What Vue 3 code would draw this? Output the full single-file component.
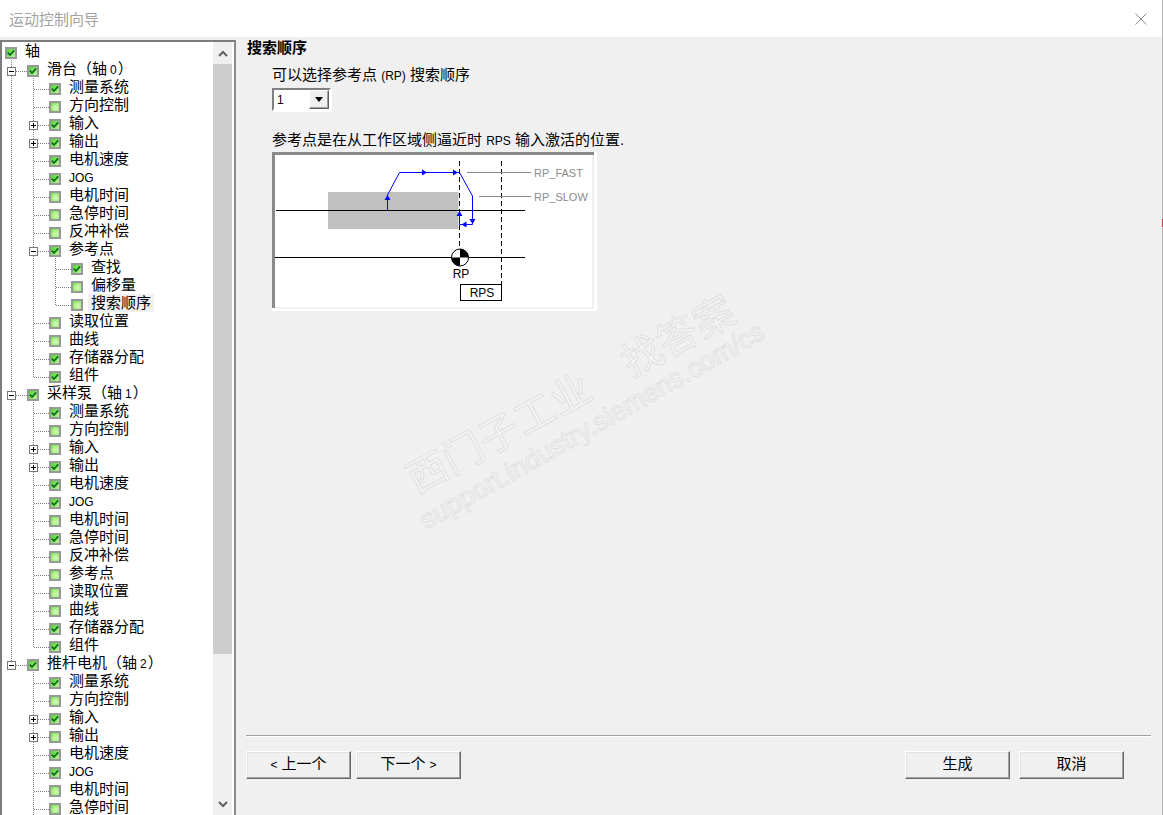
<script setup>
const r = (level, label, checked = false, exp = '', extra = '') => ({ level, label, checked, exp, extra })

const raw = [
  r(0, '轴', true),
  r(1, '滑台（轴', true, 'minus', '0'),
  r(2, '测量系统', true),
  r(2, '方向控制'),
  r(2, '输入', true, 'plus'),
  r(2, '输出', true, 'plus'),
  r(2, '电机速度', true),
  r(2, 'JOG', true),
  r(2, '电机时间'),
  r(2, '急停时间'),
  r(2, '反冲补偿'),
  r(2, '参考点', true, 'minus'),
  r(3, '查找', true),
  r(3, '偏移量'),
  r(3, '搜索顺序'),
  r(2, '读取位置'),
  r(2, '曲线'),
  r(2, '存储器分配', true),
  r(2, '组件', true),
  r(1, '采样泵（轴', true, 'minus', '1'),
  r(2, '测量系统', true),
  r(2, '方向控制'),
  r(2, '输入', false, 'plus'),
  r(2, '输出', true, 'plus'),
  r(2, '电机速度', true),
  r(2, 'JOG', true),
  r(2, '电机时间'),
  r(2, '急停时间', true),
  r(2, '反冲补偿'),
  r(2, '参考点'),
  r(2, '读取位置'),
  r(2, '曲线'),
  r(2, '存储器分配', true),
  r(2, '组件', true),
  r(1, '推杆电机（轴', true, 'minus', '2'),
  r(2, '测量系统', true),
  r(2, '方向控制'),
  r(2, '输入', true, 'plus'),
  r(2, '输出', false, 'plus'),
  r(2, '电机速度', true),
  r(2, 'JOG', true),
  r(2, '电机时间'),
  r(2, '急停时间'),
]

// the list goes on below the fold, level 2 lines keep running
function hasNext(index, level) {
  for (let i = index + 1; i < raw.length; i++) {
    if (raw[i].level < level) return false
    if (raw[i].level === level) return true
  }
  return level === 2
}

const rows = raw.map((row, index) => {
  const cells = []
  for (let l = 1; l <= row.level; l++) {
    const next = hasNext(index, l)
    cells.push({ conn: l === row.level, line: next, exp: l === row.level ? row.exp : '' })
  }
  return { ...row, cells, selected: index === 14 }
})
</script>

<template>
  <div class="window">
    <div class="titlebar">
      <span class="title">运动控制向导</span>
      <svg class="close" width="12" height="12" viewBox="0 0 12 12">
        <path d="M0.5 0.5L11.5 11.5M11.5 0.5L0.5 11.5" stroke="#8a8a8a" stroke-width="1" fill="none" />
      </svg>
    </div>

    <div class="body">
      <div class="tree">
        <div class="rows">
          <div v-for="(row, i) in rows" :key="i" class="row">
            <span
              v-for="(cell, c) in row.cells"
              :key="c"
              :class="['cell', { line: cell.line, conn: cell.conn }]"
            >
              <span v-if="cell.exp" class="expander">
                <i class="bar-h"></i>
                <i v-if="cell.exp === 'plus'" class="bar-v"></i>
              </span>
            </span>
            <span class="box" :class="{ on: row.checked }">
              <svg v-if="row.checked" width="8" height="8" viewBox="0 0 8 8">
                <path d="M0.8 3.6L3 6L7.2 1.4" stroke="#0b6b1c" stroke-width="1.8" fill="none" />
              </svg>
            </span>
            <span class="label" :class="{ selected: row.selected, small: row.label === 'JOG' }">{{ row.label }}<template v-if="row.extra"><span class="num">{{ row.extra }}</span>）</template></span>
          </div>
        </div>
        <div class="scrollbar">
          <div class="arrow">
            <svg width="10" height="7" viewBox="0 0 10 7">
              <path d="M1 6L5 2L9 6" stroke="#606060" stroke-width="2" fill="none" />
            </svg>
          </div>
          <div class="thumb"></div>
          <div class="track"></div>
          <div class="arrow">
            <svg width="10" height="7" viewBox="0 0 10 7">
              <path d="M1 1L5 5L9 1" stroke="#606060" stroke-width="2" fill="none" />
            </svg>
          </div>
        </div>
      </div>

      <div class="panel">
        <h1 class="heading">搜索顺序</h1>
        <div class="content">
          <p class="intro">可以选择参考点 <span class="latin">(RP)</span> 搜索顺序</p>
          <div class="select">
            <span class="value">1</span>
            <span class="drop"><i class="tri"></i></span>
          </div>
          <p class="desc">参考点是在从工作区域侧逼近时 <span class="latin">RPS</span> 输入激活的位置.</p>
          <svg class="diagram" width="325" height="159" viewBox="0 0 325 159">
            <rect x="0" y="0" width="325" height="159" fill="#fff" />
            <path d="M0 0H322V3H3V156H0Z" fill="#8a8a8a" />
            <path d="M3 156H321V3" stroke="#e2e2e2" fill="none" />
            <rect x="56" y="40" width="130.500" height="37" fill="#c0c0c0" />
            <path d="M4 58.500H253M3 105.500H253" stroke="#000" stroke-width="1" />
            <path d="M187.500 9V98M229.500 9V132" stroke="#000" stroke-width="1" stroke-dasharray="5 3" fill="none" />
            <path d="M195 20.500H259M207 44.500H259" stroke="#888" stroke-width="1" />
            <path
              d="M115.500 58V43L127.500 20.500H187.500L200.500 44V72.500H187.500V60"
              stroke="#0000ff"
              stroke-width="1"
              fill="none"
            />
            <path d="M115.500 43L112.500 48H118.500ZM187.500 59L184.500 64H190.500Z" fill="#0000ff" />
            <path d="M155 20.500L150 17.500V23.500ZM186 20.500L181 17.500V23.500Z" fill="#0000ff" />
            <path d="M200.500 72L197.500 67H203.500ZM189.500 72.500L194.500 69.500V75.500Z" fill="#0000ff" />
            <circle cx="188" cy="105.500" r="8.500" fill="#fff" stroke="#000" stroke-width="1" />
            <path d="M188 105.500V97A8.500 8.500 0 0 1 196.500 105.500ZM188 105.500V114A8.500 8.500 0 0 1 179.500 105.500Z" fill="#000" />
            <text x="189" y="126" class="dia-text" text-anchor="middle">RP</text>
            <rect x="188.500" y="132.500" width="41" height="16" fill="#fff" stroke="#000" stroke-width="1" />
            <text x="210" y="145" class="dia-text" text-anchor="middle">RPS</text>
            <text x="262" y="24.500" class="dia-label">RP_FAST</text>
            <text x="262" y="48.500" class="dia-label">RP_SLOW</text>
          </svg>
        </div>

        <div class="footer">
          <div class="divider"></div>
          <div class="buttons">
            <button class="btn"><span class="latin">&lt;</span> 上一个</button>
            <button class="btn">下一个 <span class="latin">&gt;</span></button>
            <button class="btn push">生成</button>
            <button class="btn">取消</button>
          </div>
        </div>
      </div>
    </div>

    <div class="edge"></div>
    <span class="wm wm-cn">西门子工业　找答案</span>
    <span class="wm wm-en">support.industry.siemens.com/cs</span>
  </div>
</template>

<style scoped>
.window {
  position: relative;
  width: 100%;
  height: 815px;
  overflow: hidden;
  display: flex;
  flex-direction: column;
  background: #f0f0f0;
  color: #000;
  font-family: "Liberation Sans", "Noto Sans CJK SC", sans-serif;
  font-size: 15px;
}
.titlebar {
  height: 37px;
  flex: none;
  background: #fff;
  display: flex;
  align-items: center;
  justify-content: space-between;
  padding: 0 16px 0 9px;
}
.title {
  color: #a3a3a3;
  font-size: 15px;
}
.body {
  flex: 1;
  display: flex;
  min-height: 0;
}
.tree {
  width: 236px;
  flex: none;
  box-sizing: border-box;
  margin-top: 3px;
  display: flex;
  background: #fff;
  border-top: 2px solid #7c7c7c;
  border-left: 2px solid #7c7c7c;
  border-right: 2px solid #8a8a8a;
  padding-right: 2px;
}
.rows {
  flex: 1;
  min-width: 0;
  overflow: hidden;
}
.row {
  height: 18px;
  margin-left: -2px;
  display: flex;
  line-height: 18px;
  white-space: nowrap;
}
.cell {
  position: relative;
  width: 22px;
  height: 18px;
  flex: none;
}
.line::before,
.conn::before {
  content: "";
  position: absolute;
  left: 11px;
  top: 0;
  width: 1px;
  background: repeating-linear-gradient(to bottom, #808080 0 1px, transparent 1px 2px);
}
.line::before {
  height: 18px;
}
.conn::before {
  height: 11px;
}
.conn.line::before {
  height: 18px;
}
.conn::after {
  content: "";
  position: absolute;
  left: 12px;
  top: 11px;
  width: 15px;
  height: 1px;
  background: repeating-linear-gradient(to right, #808080 0 1px, transparent 1px 2px);
}
.expander {
  position: absolute;
  z-index: 1;
  left: 7px;
  top: 7px;
  width: 9px;
  height: 9px;
  box-sizing: border-box;
  background: #fff;
  border: 1px solid #777;
}
.bar-h {
  position: absolute;
  left: 1px;
  top: 3px;
  width: 5px;
  height: 1px;
  background: #000;
}
.bar-v {
  position: absolute;
  left: 3px;
  top: 1px;
  width: 1px;
  height: 5px;
  background: #000;
}
.box {
  position: relative;
  z-index: 1;
  flex: none;
  width: 12px;
  height: 12px;
  box-sizing: border-box;
  margin: 5px 5px 0;
  border: 2px solid #989898;
  background: radial-gradient(circle at 60% 60%, #d4f9b8 0, #b4f090 45%, #62dc3a 100%);
  display: flex;
}
.box.on {
  background: linear-gradient(135deg, #4fd42c, #bdf59c);
}
.label {
  height: 18px;
  padding: 0 3px;
}
.label.selected {
  background: #f0f0f0;
}
.label.small {
  font-size: 12px;
  line-height: 20px;
}
.num {
  font-size: 12px;
  line-height: 0;
  margin: 0 1px 0 3px;
}
.latin {
  font-size: 12px;
  line-height: 0;
}
.scrollbar {
  width: 19px;
  flex: none;
  display: flex;
  flex-direction: column;
  background: #f0f0f0;
}
.arrow {
  height: 22px;
  flex: none;
  display: flex;
  align-items: center;
  justify-content: center;
}
.thumb {
  height: 590px;
  flex: none;
  background: #cdcdcd;
}
.track {
  flex: 1;
}
.panel {
  flex: 1;
  min-width: 0;
  padding: 0 12px 0 10px;
  display: flex;
  flex-direction: column;
}
.heading {
  margin: 2px 0 0 1px;
  font-size: 15px;
  line-height: 18px;
  font-weight: 700;
}
.content {
  flex: 1;
  padding-left: 26px;
}
.intro {
  height: 18px;
  margin: 9px 0 0;
  line-height: 18px;
}
.select {
  margin-top: 4px;
  width: 59px;
  height: 23px;
  box-sizing: border-box;
  display: flex;
  background: #fff;
  border-top: 2px solid #808080;
  border-left: 2px solid #808080;
  border-right: 2px solid #fff;
  border-bottom: 2px solid #fff;
  box-shadow: 1px 1px 0 #fff;
}
.value {
  flex: 1;
  padding-left: 3px;
  font-size: 12px;
  line-height: 21px;
}
.drop {
  width: 20px;
  display: flex;
  align-items: center;
  justify-content: center;
  background: #f0f0f0;
  border: 1px solid;
  border-color: #fff #606060 #606060 #fff;
  box-shadow: inset -1px -1px 0 #a0a0a0;
  box-sizing: border-box;
}
.tri {
  width: 0;
  height: 0;
  border-left: 4px solid transparent;
  border-right: 4px solid transparent;
  border-top: 5px solid #000;
}
.desc {
  height: 18px;
  margin: 20px 0 0;
  line-height: 18px;
}
.diagram {
  display: block;
  margin-top: 3px;
}
.dia-text {
  font-size: 12px;
  fill: #000;
}
.dia-label {
  font-size: 11px;
  fill: #8c8c8c;
}
.footer {
  height: 80px;
  flex: none;
}
.divider {
  height: 1px;
  background: #a0a0a0;
  border-bottom: 1px solid #fff;
}
.buttons {
  display: flex;
  gap: 5px;
  margin-top: 14px;
  padding-right: 27px;
}
.btn {
  width: 105px;
  height: 28px;
  box-sizing: border-box;
  padding: 0 0 5px;
  border: 1px solid;
  border-color: #fff #696969 #696969 #fff;
  box-shadow: inset -1px -1px 0 #a0a0a0, inset 1px 1px 0 #e3e3e3;
  background: #f0f0f0;
  color: #000;
  font-family: inherit;
  font-size: 15px;
}
.push {
  margin-left: auto;
}
.push + .btn {
  margin-left: 4px;
}
.edge {
  position: absolute;
  top: 0;
  right: 0;
  bottom: 0;
  width: 1px;
  background: linear-gradient(to bottom, #b8b8b8 0 219px, #d03a4a 219px 227px, #b8b8b8 227px);
}
.wm {
  position: absolute;
  white-space: nowrap;
  transform-origin: 0 50%;
  pointer-events: none;
  color: #f4f4f4;
  -webkit-text-stroke: 1px #e1e1e1;
}
.wm-cn {
  left: 410px;
  top: 457px;
  font-size: 40px;
  line-height: 50px;
  letter-spacing: 0.7px;
  transform: rotate(-28.500deg);
}
.wm-en {
  left: 422px;
  top: 506px;
  font-size: 27px;
  line-height: 32px;
  transform: rotate(-29.500deg);
}
</style>

<style>
html,
body {
  margin: 0;
  overflow: hidden;
}
</style>
